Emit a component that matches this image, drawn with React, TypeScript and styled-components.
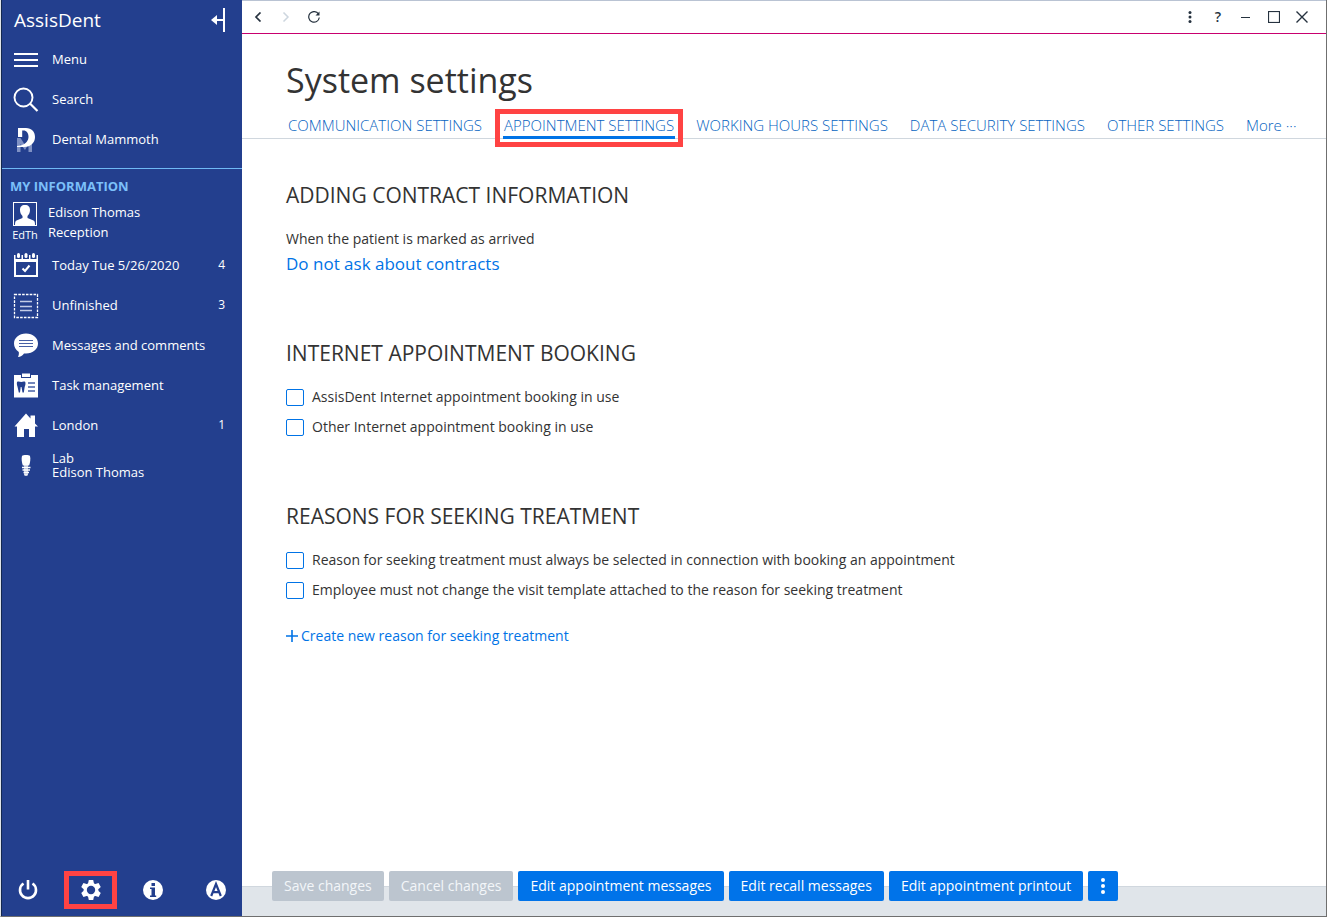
import React from 'react';
import styled, { createGlobalStyle } from 'styled-components';

const GlobalStyle = createGlobalStyle`
  *, *::before, *::after { box-sizing: border-box; }
  body { margin: 0; background: #fff; color: #333; font: 14px/20px "Segoe UI", "Open Sans", "Noto Sans", sans-serif; }
  button { font: inherit; color: inherit; border: 0; background: none; padding: 0; cursor: pointer; }
  h1, h2, p, ul { margin: 0; padding: 0; font-weight: 400; }
  a { text-decoration: none; color: inherit; }
  svg { display: block; flex: none; }
`;

const Shell = styled.div`
  display: grid;
  grid-template-columns: 241px minmax(0, 1fr);
  min-height: 100vh;
  border: solid #6f6f6f;
  border-width: 0 1px 1px;
  border-left-color: #dfe3e8;
`;

const Sidebar = styled.aside`
  display: flex;
  flex-direction: column;
  background: #233f8e;
  border-left: 1px solid #14284f;
  color: #fff;
  font-size: 13px;
`;

const Brand = styled.div`
  display: flex;
  align-items: center;
  justify-content: space-between;
  height: 39px;
  padding: 0 17px 0 12px;
  font-size: 19px;
`;

const NavList = styled.ul`
  list-style: none;
`;

const NavLink = styled.a`
  display: flex;
  align-items: center;
  gap: 12px;
  height: 40px;
  padding: 0 17px 0 11px;
  line-height: 14px;
`;

const NavLabel = styled.span`
  flex: 1;
  white-space: pre-line;
`;

const NavCount = styled.span`
  font-size: 12px;
`;

const SectionTitle = styled.h2`
  margin-top: 9px;
  padding: 7px 8px 5px;
  border-top: 1px solid #6fb9f5;
  color: #7cc0fa;
  font-size: 13px;
  font-weight: 700;
`;

const Profile = styled.a`
  display: flex;
  gap: 9px;
  height: 44px;
  padding: 1px 9px;
`;

const Initials = styled.span`
  display: flex;
  flex-direction: column;
  align-items: center;
  width: 28px;
  font-size: 11px;
  line-height: 16px;
`;

const SidebarTools = styled.div`
  display: flex;
  gap: 10px;
  margin-top: auto;
  padding-bottom: 7px;
`;

const ToolButton = styled.button<{ $marked?: boolean }>`
  display: grid;
  place-items: center;
  width: 53px;
  height: 38px;
  border: ${p => (p.$marked ? '5px solid #ff4343' : '0')};
`;

const Main = styled.div`
  display: flex;
  flex-direction: column;
  min-width: 0;
`;

const WindowBar = styled.header`
  display: flex;
  align-items: center;
  justify-content: space-between;
  height: 34px;
  padding: 0 16px 0 8px;
  border-top: 1px solid #b9c3d3;
  border-bottom: 1px solid #c8006f;
  color: #26323f;
`;

const BarGroup = styled.div`
  display: flex;
  align-items: center;
  gap: 12px;
`;

const BarButton = styled.button`
  display: grid;
  place-items: center;
  width: 16px;
  height: 24px;
  font-weight: 600;

  &:disabled { color: #cdd6df; }
`;

const PageTitle = styled.h1`
  padding: 21px 44px 0;
  margin-bottom: 1px;
  font-size: 34px;
  line-height: 50px;
`;

const Tabs = styled.nav`
  display: flex;
  gap: 20px;
  height: 33px;
  padding: 8px 45px 0;
  border-bottom: 1px solid #d0d7de;
  color: #0563c1;
  font-size: 15px;
  font-weight: 300;
  white-space: nowrap;
`;

const Tab = styled.a<{ $active?: boolean }>`
  position: relative;
  height: 25px;
  padding: 0 1px;
  line-height: 22px;
  border-bottom: ${p => (p.$active ? '3px solid #0073e6' : '0')};

  &::after {
    content: ${p => (p.$active ? '""' : 'none')};
    position: absolute;
    inset: -5px -8px -11px;
    border: 5px solid #ff4343;
  }
`;

const Content = styled.main`
  display: flex;
  flex-direction: column;
  gap: 59px;
  flex: 1;
  padding: 41px 44px;
`;

const SectionHeading = styled.h2`
  margin-bottom: 14px;
  font-size: 21px;
  line-height: 30px;
`;

const FieldLabel = styled.p`
  padding-top: 5px;
`;

const ValueLink = styled.a`
  display: block;
  color: #0073e6;
  font-size: 17px;
  line-height: 30px;
`;

const CheckRow = styled.label`
  display: flex;
  align-items: center;
  gap: 8px;
  height: 30px;
`;

const CheckBox = styled.input`
  appearance: none;
  width: 18px;
  height: 17px;
  margin: 0;
  border: 1px solid #0073e6;
  border-radius: 2px;
  background: #fff;

  &:checked { background: #0073e6; }
`;

const CreateButton = styled.button`
  display: flex;
  align-items: center;
  gap: 3px;
  margin-top: 21px;
  color: #0073e6;
`;

const ActionBar = styled.footer`
  display: flex;
  gap: 5px;
  height: 45px;
  padding: 0 30px;
  background: linear-gradient(to bottom, #fff 15px, #d0d7de 15px, #d0d7de 16px, #e0e5ea 16px);
`;

const ActionButton = styled.button<{ $icon?: boolean }>`
  display: flex;
  align-items: center;
  height: 30px;
  padding: 0 ${p => (p.$icon ? 11 : 12)}px;
  border-radius: 2px;
  background: #0073e9;
  color: #fff;
  white-space: nowrap;

  &:disabled { background: #bcc5cf; color: #f3f6f9; }
`;

const Dots = ({ r = 2, gap = 5 }: { r?: number; gap?: number }) => (
  <svg width="8" height="20" viewBox="0 0 8 20" fill="currentColor">
    {[-1, 0, 1].map(i => <circle key={i} cx="4" cy={10 + i * gap} r={r} />)}
  </svg>
);

const Glyph = ({ children }: { children: React.ReactNode }) => (
  <svg width="27" height="28" viewBox="0 0 27 28" fill="none" stroke="none">{children}</svg>
);

const icons = {
  menu: <Glyph><path d="M1 9h24M1 15h24M1 21h24" stroke="#fff" strokeWidth="2" /></Glyph>,
  search: <Glyph><circle cx="10.500" cy="12.500" r="9" stroke="#fff" strokeWidth="1.900" /><path d="M17 18.500l7.500 7.500" stroke="#fff" strokeWidth="2.200" /></Glyph>,
  mammoth: (
    <Glyph>
      <path d="M4 27V13h3.500l4.500 7 4-7h3v14h-3.500v-8L12 25l-4.500-6v8z" fill="#7f91c4" />
      <path d="M5 3h8c5.500 0 9 3.500 9 9s-4 10-11 10H4v-1c6-.5 11.500-3 11.500-9 0-4-2-6.500-5-6.500H9.200V12H5z" fill="#fff" />
    </Glyph>
  ),
  calendar: (
    <Glyph>
      <path d="M1 4h24v22H1zM3 11v13h20V11z" fill="#fff" fillRule="evenodd" />
      {[5.5, 13, 20.5].map(x => <g key={x}><rect x={x - 3} y="3" width="6" height="5" fill="#233f8e" /><rect x={x - 1.5} y="2" width="3" height="5" rx="1.500" fill="#fff" /></g>)}
      <path d="M9.500 17.500l2.500 2.500 4.500-5.500" stroke="#fff" strokeWidth="2" />
    </Glyph>
  ),
  unfinished: (
    <Glyph>
      <rect x="1.500" y="3.500" width="23" height="23" stroke="#fff" strokeWidth="1.300" strokeDasharray="2.600 1.200" />
      <path d="M7 10.500h12M7 15.500h12M7 19.500h12" stroke="#c3cce6" strokeWidth="1.400" />
    </Glyph>
  ),
  messages: (
    <Glyph>
      <path d="M13 2.500c7 0 12 4.500 12 10s-5 10-12 10h-2c-1.500 2-3.500 3.500-6 3.500.8-1.500 1-3 .8-5C2.800 19 1 16 1 12.500c0-5.500 5-10 12-10z" fill="#fff" />
      <path d="M6 9.500h14M6 12.500h14M6 15.500h14" stroke="#4760a5" strokeWidth="1.200" />
    </Glyph>
  ),
  tasks: (
    <Glyph>
      <path d="M1 4h7v3h10V4h7v22.500H1z" fill="#fff" />
      <path d="M9 2.500h8V6H9z" fill="#fff" />
      <path d="M4 11c1.500-1 3 0 4.200 0S11 10 12.300 11c.7 2.500-.5 4-.8 6l-.7 4.500H9.500L8.500 16h-.8L7 21.500H5.800L4.800 17C4.500 15 3.400 13.500 4 11z" fill="#233f8e" />
      <path d="M15 12h7M15 16h7M15 20h7" stroke="#4760a5" strokeWidth="1.400" />
    </Glyph>
  ),
  home: <Glyph><path d="M1.500 15.500L13 2.500l4.500 5V4.500H22v8l3 3h-3V26h-6v-8h-5v8H4V15.500z" fill="#fff" /></Glyph>,
  implant: (
    <Glyph>
      <path d="M9 5c1-1.200 7-1.200 8 0 .8 3 .2 6-.8 9.500H9.800C8.800 11 8.200 8 9 5z" fill="#fff" />
      <path d="M9 16.500h8.500M9.500 19h7.500M10.500 21.500h5.500M11.500 24h3" stroke="#fff" strokeWidth="1.500" />
      <path d="M11 14h4v10h-4z" fill="#fff" opacity=".7" />
    </Glyph>
  ),
};

const mainNav = [
  { icon: icons.menu, label: 'Menu' },
  { icon: icons.search, label: 'Search' },
  { icon: icons.mammoth, label: 'Dental Mammoth' },
];

const myNav = [
  { icon: icons.calendar, label: 'Today Tue 5/26/2020', count: 4 },
  { icon: icons.unfinished, label: 'Unfinished', count: 3 },
  { icon: icons.messages, label: 'Messages and comments' },
  { icon: icons.tasks, label: 'Task management' },
  { icon: icons.home, label: 'London', count: 1 },
  { icon: icons.implant, label: 'Lab\nEdison Thomas' },
];

const Nav = ({ items }: { items: { icon: React.ReactNode; label: string; count?: number }[] }) => (
  <NavList>
    {items.map(item => (
      <li key={item.label}>
        <NavLink href="#">{item.icon}<NavLabel>{item.label}</NavLabel>{item.count && <NavCount>{item.count}</NavCount>}</NavLink>
      </li>
    ))}
  </NavList>
);

const Check = ({ children }: { children: React.ReactNode }) => (
  <CheckRow><CheckBox type="checkbox" />{children}</CheckRow>
);

const tabs = ['COMMUNICATION SETTINGS', 'APPOINTMENT SETTINGS', 'WORKING HOURS SETTINGS', 'DATA SECURITY SETTINGS', 'OTHER SETTINGS'];

export default function App() {
  return (
    <>
      <GlobalStyle />
      <Shell>
        <Sidebar>
          <Brand>
            AssisDent
            <button aria-label="Collapse sidebar">
              <svg width="14" height="24" viewBox="0 0 14 24"><path d="M13 0v24" stroke="#fff" strokeWidth="2" /><path d="M12 12H3" stroke="#fff" strokeWidth="2" /><path d="M0 12l6-5v10z" fill="#fff" /></svg>
            </button>
          </Brand>
          <Nav items={mainNav} />
          <SectionTitle>MY INFORMATION</SectionTitle>
          <Profile href="#">
            <Initials>
              <svg width="24" height="25" viewBox="0 0 24 25"><rect x=".5" y=".5" width="23" height="23" fill="none" stroke="#fff" /><path d="M12 3c3.500 0 5 2 5 5 0 2.500-1 4.500-2.500 6v2l6 2.500c1 .5 1.500 1.500 1.500 4.500H2c0-3 .5-4 1.500-4.500l6-2.500v-2C8 12.500 7 10.500 7 8c0-3 1.500-5 5-5z" fill="#fff" /></svg>
              EdTh
            </Initials>
            <span>Edison Thomas<br />Reception</span>
          </Profile>
          <Nav items={myNav} />
          <SidebarTools>
            <ToolButton aria-label="Log out">
              <svg width="20" height="20" viewBox="0 0 20 20" fill="none" stroke="#fff" strokeWidth="2.600"><path d="M5.500 3.500a8 8 0 1 0 9 0M10 0v9.500" /></svg>
            </ToolButton>
            <ToolButton $marked aria-label="Settings">
              <svg width="20" height="20" viewBox="0 0 20 20">
                {[0, 60, 120].map(a => <path key={a} d="M7.800 0h4.400l.9 4v12l-.9 4H7.800l-.9-4V4z" fill="#fff" transform={`rotate(${a} 10 10)`} />)}
                <circle cx="10" cy="10" r="7.300" fill="#fff" />
                <circle cx="10" cy="10" r="4.200" fill="#233f8e" />
              </svg>
            </ToolButton>
            <ToolButton aria-label="Information">
              <svg width="20" height="20" viewBox="0 0 20 20"><circle cx="10" cy="10" r="10" fill="#fff" /><path d="M8.500 3h3.500v3H8.500zM7 7.500h5V15.500h1.200V17H7v-1.500h1.500V9H7z" fill="#233f8e" /></svg>
            </ToolButton>
            <ToolButton aria-label="Accessibility">
              <svg width="20" height="20" viewBox="0 0 20 20"><circle cx="10" cy="10" r="10" fill="#fff" /><path d="M5.200 16L10 4l4.800 12M6.800 12.200h6.400" fill="none" stroke="#233f8e" strokeWidth="2.200" /></svg>
            </ToolButton>
          </SidebarTools>
        </Sidebar>
        <Main>
          <WindowBar>
            <BarGroup>
              <BarButton aria-label="Back"><svg width="8" height="10" viewBox="0 0 8 10" fill="none" stroke="currentColor" strokeWidth="1.700"><path d="M6.500.5L2 5l4.500 4.500" /></svg></BarButton>
              <BarButton disabled aria-label="Forward"><svg width="8" height="10" viewBox="0 0 8 10" fill="none" stroke="currentColor" strokeWidth="1.500"><path d="M1.500.5L6 5 1.500 9.500" /></svg></BarButton>
              <BarButton aria-label="Reload"><svg width="12" height="12" viewBox="0 0 12 12" fill="none" stroke="currentColor" strokeWidth="1.200"><path d="M10.500 3A5.300 5.300 0 1 0 11.300 6.500" /><path d="M11.500.5v4h-4z" fill="currentColor" stroke="none" /></svg></BarButton>
            </BarGroup>
            <BarGroup>
              <BarButton aria-label="More options"><Dots r={1.5} gap={4.5} /></BarButton>
              <BarButton aria-label="Help">?</BarButton>
              <BarButton aria-label="Minimize"><svg width="10" height="12" viewBox="0 0 10 12"><path d="M0 6.500h9" stroke="currentColor" /></svg></BarButton>
              <BarButton aria-label="Maximize"><svg width="12" height="12" viewBox="0 0 12 12"><rect x=".5" y=".5" width="11" height="11" fill="none" stroke="currentColor" strokeWidth="1.200" /></svg></BarButton>
              <BarButton aria-label="Close"><svg width="12" height="12" viewBox="0 0 12 12"><path d="M.5.500l11 11M11.500.500l-11 11" stroke="currentColor" strokeWidth="1.400" /></svg></BarButton>
            </BarGroup>
          </WindowBar>
          <PageTitle>System settings</PageTitle>
          <Tabs>
            {tabs.map(tab => <Tab key={tab} href="#" $active={tab.startsWith('APP')}>{tab}</Tab>)}
            <Tab href="#">More ···</Tab>
          </Tabs>
          <Content>
            <section>
              <SectionHeading>ADDING CONTRACT INFORMATION</SectionHeading>
              <FieldLabel>When the patient is marked as arrived</FieldLabel>
              <ValueLink href="#">Do not ask about contracts</ValueLink>
            </section>
            <section>
              <SectionHeading>INTERNET APPOINTMENT BOOKING</SectionHeading>
              <Check>AssisDent Internet appointment booking in use</Check>
              <Check>Other Internet appointment booking in use</Check>
            </section>
            <section>
              <SectionHeading>REASONS FOR SEEKING TREATMENT</SectionHeading>
              <Check>Reason for seeking treatment must always be selected in connection with booking an appointment</Check>
              <Check>Employee must not change the visit template attached to the reason for seeking treatment</Check>
              <CreateButton>
                <svg width="12" height="12" viewBox="0 0 12 12"><path d="M6 0v12M0 6h12" stroke="currentColor" strokeWidth="1.600" /></svg>
                Create new reason for seeking treatment
              </CreateButton>
            </section>
          </Content>
          <ActionBar>
            <ActionButton disabled>Save changes</ActionButton>
            <ActionButton disabled>Cancel changes</ActionButton>
            <ActionButton>Edit appointment messages</ActionButton>
            <ActionButton>Edit recall messages</ActionButton>
            <ActionButton>Edit appointment printout</ActionButton>
            <ActionButton $icon aria-label="More actions"><Dots r={2} gap={6} /></ActionButton>
          </ActionBar>
        </Main>
      </Shell>
    </>
  );
}
